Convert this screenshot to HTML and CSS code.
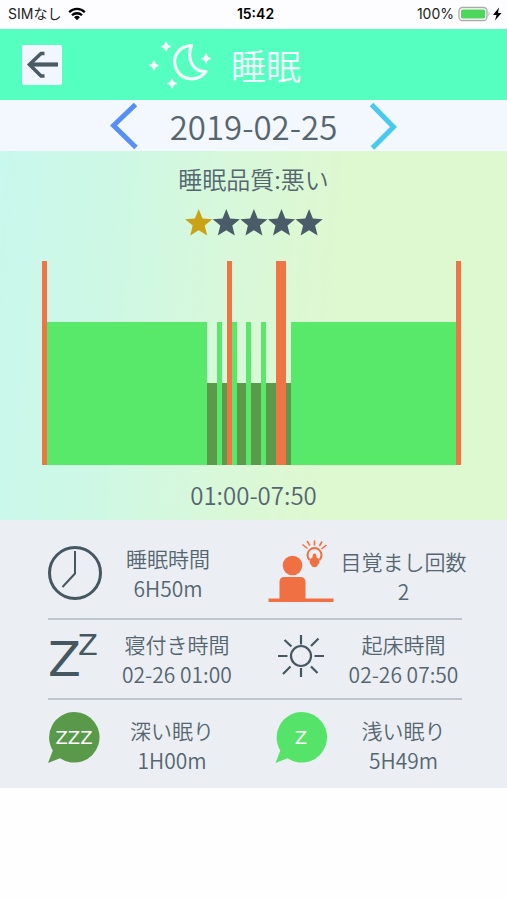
FILE: index.html
```html
<!DOCTYPE html>
<html lang="ja">
<head>
<meta charset="utf-8">
<meta name="viewport" content="width=device-width, initial-scale=1">
<title>睡眠</title>
<link rel="stylesheet" href="styles.css">
</head>
<body>
<div class="status">
  <div class="status-side">
    <span>SIMなし</span>
    <svg width="18" height="14" viewBox="0 0 18 14" aria-hidden="true"><g fill="none" stroke="#000" stroke-width="2.3"><path d="M1.2 5.2a11 11 0 0 1 15.6 0"/><path d="M4 8.3a7.1 7.1 0 0 1 10 0"/></g><path d="M9 13.3 6.1 10.3a4.1 4.1 0 0 1 5.8 0z"/></svg>
  </div>
  <strong>15:42</strong>
  <div class="status-side status-right">
    <span>100%</span>
    <svg width="45" height="16" viewBox="0 0 45 16" aria-hidden="true"><rect x="1" y="1.5" width="28" height="13" rx="3.5" fill="#fff" stroke="#a9aba9" stroke-width="1.3"/><rect x="3" y="3.5" width="24" height="9" rx="1.5" fill="#4cd65c"/><path d="M30.500 5.500q2 2.500 0 5z" fill="#a9aba9"/><path d="M41 1.500 35 9h3.500L37 14.500 43.500 7H40z"/></svg>
  </div>
</div>

<header class="header">
  <button class="back" type="button" aria-label="戻る">
    <svg width="40" height="40" viewBox="0 0 40 40"><g fill="none" stroke="#4b5b66"><path d="M36 19.500H8" stroke-width="4.200"/><path d="M22.500 8.500H19L7.500 19.500 19 31h3.500" stroke-width="3.600"/></g></svg>
  </button>
  <svg class="moon" width="64" height="48" viewBox="0 0 64 48" aria-hidden="true">
    <path d="M42.500 4.500C29 5 22 17 27.500 28.500S49 41 57 30.500C44 31 37 18 42.500 4.500z" fill="none" stroke="#f7fffc" stroke-width="3.200" stroke-linejoin="round"/>
    <g fill="#f7fffc"><path id="spark" d="M17 1c.8 3.200 1.200 3.700 4.500 4.500-3.300.8-3.700 1.300-4.500 4.500-.8-3.200-1.200-3.700-4.500-4.500 3.300-.8 3.700-1.300 4.500-4.500z" stroke="#f7fffc" stroke-width="1.500"/><use href="#spark" x="-12" y="19"/><use href="#spark" x="6" y="37"/><use href="#spark" x="40" y="12"/></g>
  </svg>
  <h1 class="title">睡眠</h1>
</header>

<nav class="dates">
  <button class="step" type="button" aria-label="前の日"><svg width="28" height="48" viewBox="0 0 28 48"><path d="M25.500 2.500 3.500 23.500 26 45.500" fill="none" stroke="#558ff7" stroke-width="5"/></svg></button>
  <time datetime="2019-02-25">2019-02-25</time>
  <button class="step" type="button" aria-label="次の日"><svg width="28" height="48" viewBox="0 0 28 48"><path d="M2.500 2.500 24.500 25 3.500 46" fill="none" stroke="#49c9ed" stroke-width="5"/></svg></button>
</nav>

<main>
  <section class="panel">
    <h2 class="quality">睡眠品質:悪い</h2>
    <svg class="stars" width="138" height="28" viewBox="0 0 138 28" role="img" aria-label="5点中1点">
      <defs><path id="star" d="M13.700 0 17.500 9.500 27.300 10.200 19.700 16.600 22.200 26.500 13.700 21.200 5.200 26.500 7.700 16.600 .1 10.200 9.900 9.500z"/></defs>
      <use href="#star" fill="#c9a216"/>
      <g fill="#4a5c68"><use href="#star" x="27.600"/><use href="#star" x="55.200"/><use href="#star" x="82.800"/><use href="#star" x="110.400"/></g>
    </svg>
    <div class="chart" role="img" aria-label="睡眠グラフ">
      <i class="awake" style="flex-grow:1"></i>
      <i class="light" style="flex-grow:32"></i>
      <i class="deep" style="flex-grow:2"></i>
      <i class="light" style="flex-grow:1"></i>
      <i class="deep" style="flex-grow:1"></i>
      <i class="awake" style="flex-grow:1"></i>
      <i class="light" style="flex-grow:1"></i>
      <i class="deep" style="flex-grow:2"></i>
      <i class="light" style="flex-grow:1"></i>
      <i class="deep" style="flex-grow:2"></i>
      <i class="light" style="flex-grow:1"></i>
      <i class="deep" style="flex-grow:2"></i>
      <i class="awake" style="flex-grow:2"></i>
      <i class="deep" style="flex-grow:1"></i>
      <i class="light" style="flex-grow:33"></i>
      <i class="awake" style="flex-grow:1"></i>
    </div>
    <p class="range">01:00-07:50</p>
  </section>

  <section class="stats">
    <div class="row row-first">
      <div class="stat">
        <svg width="54" height="66" viewBox="0 0 54 66" aria-hidden="true"><circle cx="27" cy="33" r="25.500" fill="none" stroke="#455761" stroke-width="3"/><path d="M27 11v22.500L14.500 47" fill="none" stroke="#455761" stroke-width="2"/></svg>
        <dl><dt>睡眠時間</dt><dd>6H50m</dd></dl>
      </div>
      <div class="stat stat-right stat-low">
        <svg width="66" height="62" viewBox="0 0 66 62" aria-hidden="true"><g fill="#f17043"><circle cx="24.500" cy="25.500" r="9.800"/><path d="M11.500 59V42q0-5 5-5h16q5 0 5 5v17z"/><path d="M.5 58.500h65v4H.5z"/><path d="M46.500 13.500q2 0 2 4 3 1 3 4.200 0 2-1.500 2.800-.5 2.800-3.500 2.800t-3.500-2.800q-1.500-.8-1.500-2.800 0-3.200 3-4.200 0-4 2-4z"/></g><g fill="none" stroke="#f17043"><path d="M41.500 20a7 7 0 1 1 10 0" stroke-width="2"/><path d="m34.500 4.500 5 4M39 1l3 4.500M46.500.500V5.500M54 1.500l-2.500 4.500M58.500 5l-5 4" stroke-width="1.600"/></g></svg>
        <dl><dt>目覚まし回数</dt><dd>2</dd></dl>
      </div>
    </div>
    <hr>
    <div class="row row-middle">
      <div class="stat">
        <svg class="zs" width="50" height="52" viewBox="0 0 50 52" aria-hidden="true"><text class="z-big" x="0" y="47">Z</text><text class="z-small" x="30" y="26">Z</text></svg>
        <dl><dt>寝付き時間</dt><dd>02-26 01:00</dd></dl>
      </div>
      <div class="stat stat-right">
        <svg width="66" height="52" viewBox="0 -2 66 52" aria-hidden="true"><g fill="none" stroke="#455761" stroke-width="2.200"><circle cx="33" cy="25" r="10"/><path d="M33 4v9.500M33 37v9M10 25h9.500M46.500 25H56M16.500 9l7 6.500M50.500 7.500 43 15M15 43l7.500-7.500M49.500 42 43 35.500"/></g></svg>
        <dl><dt>起床時間</dt><dd>02-26 07:50</dd></dl>
      </div>
    </div>
    <hr>
    <div class="row row-last">
      <div class="stat">
        <svg width="58" height="52" viewBox="0 0 58 52" aria-hidden="true"><path d="M26.500 0A25.300 25.300 0 1 1 12 46.200L0 51l4.800-12.500A25.300 25.300 0 0 1 26.500 0z" fill="#59994a"/><text class="z-bubble" x="26" y="32">ZZZ</text></svg>
        <dl><dt>深い眠り</dt><dd>1H00m</dd></dl>
      </div>
      <div class="stat stat-right">
        <svg width="66" height="52" viewBox="0 0 66 52" aria-hidden="true"><path d="M34 0a25.300 25.300 0 1 1-14.500 46.200L7.500 51l4.800-12.500A25.300 25.300 0 0 1 34 0z" fill="#56e369"/><text class="z-bubble" x="33" y="32">Z</text></svg>
        <dl><dt>浅い眠り</dt><dd>5H49m</dd></dl>
      </div>
    </div>
  </section>
</main>
</body>
</html>
```
FILE: styles.css
```css
* {
  box-sizing: border-box;
}

body {
  margin: 0;
  background: #fefefe;
  color: #566670;
  font-family: "Noto Sans CJK JP", sans-serif;
  font-weight: 350;
}

h1, h2, p, dl, dd {
  margin: 0;
  font-weight: 350;
}

svg {
  display: block;
  flex-shrink: 0;
}

button {
  padding: 0;
  border: 0;
  background: none;
  cursor: pointer;
}

.status {
  display: flex;
  align-items: center;
  height: 29px;
  padding: 0 4px 2px 8px;
  background: #fdfdff;
  color: #222;
  font: 14px/20px Inter, "Noto Sans CJK JP", sans-serif;
}

.status strong {
  color: #000;
  font-weight: 600;
}

.status-side {
  display: flex;
  flex: 1;
  align-items: center;
  gap: 7px;
}

.status-right {
  justify-content: flex-end;
  gap: 4px;
}

.header {
  display: flex;
  align-items: center;
  height: 71px;
  padding-left: 22px;
  background: #54ffbf;
}

.back {
  border-radius: 2px;
  background: #f2f7ff;
}

.moon {
  margin: 0 18px 0 87px;
}

.title {
  color: #f3fffc;
  font-size: 35px;
  line-height: 48px;
}

.dates {
  display: flex;
  align-items: center;
  justify-content: center;
  gap: 32px;
  height: 51px;
  background: #f3f7fe;
  font-size: 33px;
  line-height: 48px;
}

.panel {
  display: flex;
  flex-direction: column;
  align-items: center;
  padding: 12px 42px 8px;
  background: linear-gradient(95deg, #c9f8ec 0%, #cdf8e6 20%, #daf8d7 50%, #def8d0 65%, #def8cf 100%);
}

.quality {
  font-size: 24px;
  line-height: 32px;
}

.stars {
  margin: 14px 0 24px;
}

.chart {
  display: flex;
  align-items: flex-end;
  align-self: stretch;
  height: 204px;
  margin-right: 4px;
}

.chart i {
  flex-basis: 0;
}

.awake {
  height: 100%;
  background: #f07444;
}

.light {
  height: 70%;
  background: #58e96a;
}

.deep {
  height: 40%;
  background: #5b994b;
}

.range {
  margin-top: 13px;
  padding-bottom: 1px;
  font-size: 24px;
  line-height: 33px;
}

.stats {
  background: #ebeff3;
  font-size: 21px;
  line-height: 30px;
}

.stats hr {
  height: 2px;
  margin: 0 45px 0 48px;
  border: 0;
  background: #bec5cd;
}

.row {
  display: flex;
  justify-content: space-between;
  padding-right: 40px;
  padding-left: 48px;
}

.row-first {
  padding-top: 20px;
  padding-bottom: 8px;
}

.row-middle {
  padding-top: 9px;
  padding-bottom: 5px;
}

.row-last {
  padding-top: 12px;
  padding-bottom: 7px;
}

.row-last .stat {
  min-height: 69px;
}

.stat {
  display: flex;
  gap: 24px;
}

.stat dl {
  align-self: center;
  padding-bottom: 4px;
  text-align: center;
}

.stat-right {
  gap: 6px;
}

.stat-right dl {
  width: 127px;
}

.stat-low dl {
  padding-top: 6px;
}

.zs {
  overflow: visible;
  fill: #455761;
  font-family: "DejaVu Sans", sans-serif;
  font-weight: 400;
}

.z-big {
  font-size: 48px;
}

.z-small {
  font-size: 29px;
}

.z-bubble {
  fill: #fff;
  font: 18px "DejaVu Sans", sans-serif;
  text-anchor: middle;
}
```
